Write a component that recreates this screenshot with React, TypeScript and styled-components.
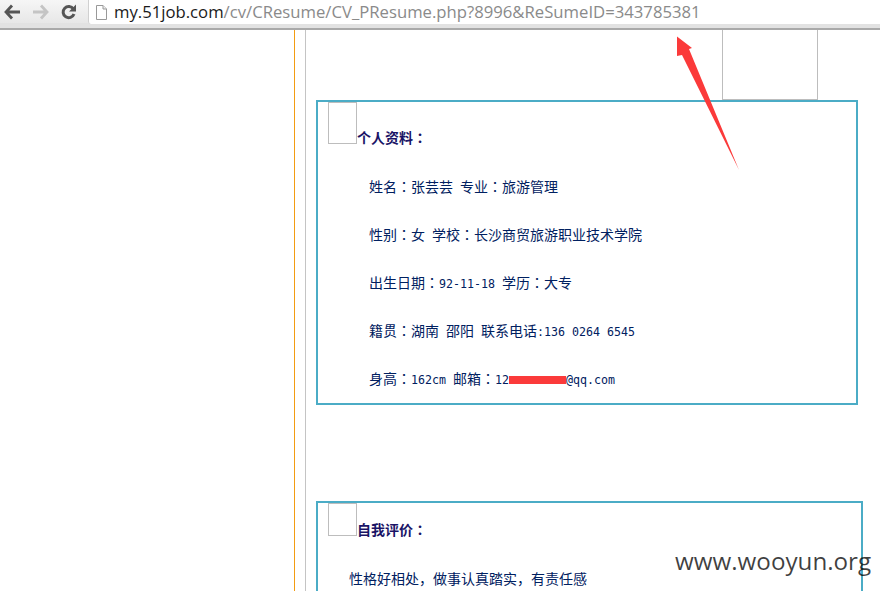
import React from 'react'
import styled, { createGlobalStyle } from 'styled-components'

const GlobalStyle = createGlobalStyle`
  html, body {
    margin: 0;
    padding: 0;
    height: 100%;
    background: #fff;
    overflow: hidden;
  }
`

export default function App(): React.ReactElement {
  const profileRows = [
    <>姓名<Colon>：</Colon>张芸芸 专业<Colon>：</Colon>旅游管理</>,
    <>性别<Colon>：</Colon>女 学校<Colon>：</Colon>长沙商贸旅游职业技术学院</>,
    <>出生日期<Colon>：</Colon><Latin>92-11-18</Latin> 学历<Colon>：</Colon>大专</>,
    <>籍贯<Colon>：</Colon>湖南 邵阳 联系电话<Latin>:136 0264 6545</Latin></>,
    <>身高<Colon>：</Colon><Latin>162cm</Latin> 邮箱<Colon>：</Colon><Latin>12</Latin><Redaction /><Latin>@qq.com</Latin></>,
  ]

  return (
    <Screen>
      <GlobalStyle />
      <Toolbar>
        <NavButton aria-label='back'>
          <svg width='18' height='16' viewBox='0 0 18 16'>
            <path d='M8 1.5 2 8l6 6.5M2.5 8H16' fill='none' stroke='#555' strokeWidth='2.8' />
          </svg>
        </NavButton>
        <NavButton aria-label='forward'>
          <svg width='18' height='16' viewBox='0 0 18 16'>
            <path d='M10 1.5 16 8l-6 6.5M15.5 8H2' fill='none' stroke='#c4c4c4' strokeWidth='2.8' />
          </svg>
        </NavButton>
        <NavButton aria-label='reload'>
          <svg width='18' height='18' viewBox='0 0 18 18'>
            <path d='M14 11a5.6 5.6 0 1 1-.6-5' fill='none' stroke='#555' strokeWidth='3' />
            <path d='M16 1.5v7h-7z' fill='#555' />
          </svg>
        </NavButton>
        <AddressBar>
          <svg width='13' height='15' viewBox='0 0 13 15'>
            <path d='M1.5.5h6.5l3.5 3.5v10.5h-10z' fill='#fff' stroke='#999' />
            <path d='M8 .5V4h3.5' fill='#eee' stroke='#999' />
          </svg>
          <Url>
            <Host>my.51job.com</Host>/cv/CResume/CV_PResume.php?8996&amp;ReSumeID=343785381
          </Url>
        </AddressBar>
      </Toolbar>

      <Page>
        <OuterColumn>
          <InnerColumn>
            <TopImage />
            <ResumeCard>
              <CardHeading>
                <BrokenImage />
                <CardTitle>个人资料<Colon>：</Colon></CardTitle>
              </CardHeading>
              <RowList>
                {profileRows.map((row, i) => (
                  <ProfileRow key={i}>{row}</ProfileRow>
                ))}
              </RowList>
            </ResumeCard>
            <ResumeCard $wide>
              <CardHeading>
                <BrokenImage $short />
                <CardTitle>自我评价<Colon>：</Colon></CardTitle>
              </CardHeading>
              <SummaryRow>性格好相处，做事认真踏实，有责任感</SummaryRow>
            </ResumeCard>
          </InnerColumn>
        </OuterColumn>
      </Page>

      <Arrow width='70' height='142' viewBox='0 0 70 142'>
        <path d='M1 0.5 L16 12 L13 13 L63 134 L6 19 L1 20 Z' fill='#fb3a3a' />
      </Arrow>
      <Watermark>www.wooyun.org</Watermark>
    </Screen>
  )
}

const Screen = styled.div`
  position: relative;
  width: 880px;
  height: 591px;
  overflow: hidden;
  font-family: "Noto Sans CJK SC", "Liberation Sans", sans-serif;
  color: #002060;
`

const Toolbar = styled.header`
  box-sizing: border-box;
  height: 30px;
  display: flex;
  align-items: flex-start;
  background: linear-gradient(#f6f6f6, #e4e4e4);
  border-bottom: 2px solid #a9a9a9;
  box-shadow: inset 0 -5px 0 #e2e2e2;
`

const NavButton = styled.div`
  width: 29px;
  height: 24px;
  flex: none;
  display: flex;
  align-items: center;
  justify-content: center;
  &:first-child {
    width: 25px;
  }
`

const AddressBar = styled.div`
  box-sizing: border-box;
  margin-left: 5px;
  flex: 1;
  height: 24px;
  display: flex;
  align-items: center;
  gap: 6px;
  padding-left: 6px;
  background: #fff;
  border-left: 1px solid #d0d0d0;
  border-bottom-left-radius: 3px;
`

const Url = styled.div`
  font-family: "Open Sans", sans-serif;
  font-size: 16.7px;
  line-height: 24px;
  color: #8a8a8a;
  white-space: nowrap;
`

const Host = styled.span`
  color: #1a1a1a;
`

const Page = styled.main`
  height: 561px;
  padding-left: 294px;
  background: #fff;
`

const OuterColumn = styled.div`
  height: 100%;
  padding-left: 10px;
  border-left: 1px solid #f39c12;
`

const InnerColumn = styled.div`
  height: 100%;
  padding-left: 10px;
  border-left: 1px solid #c4c4c4;
`

const TopImage = styled.div`
  box-sizing: border-box;
  width: 96px;
  height: 70px;
  margin-left: 406px;
  border: 1px solid #bdbdbd;
  border-top: 0;
`

const ResumeCard = styled.section<{ $wide?: boolean }>`
  box-sizing: border-box;
  width: ${(p) => (p.$wide ? 547 : 542)}px;
  height: ${(p) => (p.$wide ? 200 : 305)}px;
  margin-bottom: 96px;
  padding: 0 10px;
  border: 2px solid #4bacc6;
`

const CardHeading = styled.div`
  display: flex;
  align-items: flex-end;
`

const BrokenImage = styled.div<{ $short?: boolean }>`
  box-sizing: border-box;
  width: 29px;
  height: ${(p) => (p.$short ? 33 : 42)}px;
  border: 1px solid #bdbdbd;
`

const CardTitle = styled.h2`
  margin: 0 0 -3px;
  font-size: 14px;
  line-height: 20px;
  font-weight: 700;
  color: #1a1466;
`

const RowList = styled.div`
  display: flex;
  flex-direction: column;
  gap: 28px;
  margin-top: 32px;
  padding-left: 41px;
`

const ProfileRow = styled.div`
  height: 20px;
  font-size: 14px;
  line-height: 20px;
  word-spacing: 3.9px;
  white-space: nowrap;
`

const SummaryRow = styled.p`
  margin: 32px 0 0 21px;
  font-size: 14px;
  line-height: 20px;
`

const Colon = styled.span`
  font-family: "Noto Sans CJK TC", sans-serif;
`

const Latin = styled.span`
  font-family: "DejaVu Sans Mono", monospace;
  font-size: 11.63px;
  word-spacing: 0;
`

const Redaction = styled.span`
  display: inline-block;
  width: 57px;
  height: 8px;
  background: #fb3a3a;
`

const Arrow = styled.svg`
  position: absolute;
  left: 676px;
  top: 36px;
`

const Watermark = styled.div`
  position: absolute;
  left: 675px;
  top: 544px;
  font-family: "Open Sans", sans-serif;
  font-size: 24.2px;
  line-height: 34px;
  color: rgba(0, 0, 0, 0.75);
  white-space: nowrap;
`
